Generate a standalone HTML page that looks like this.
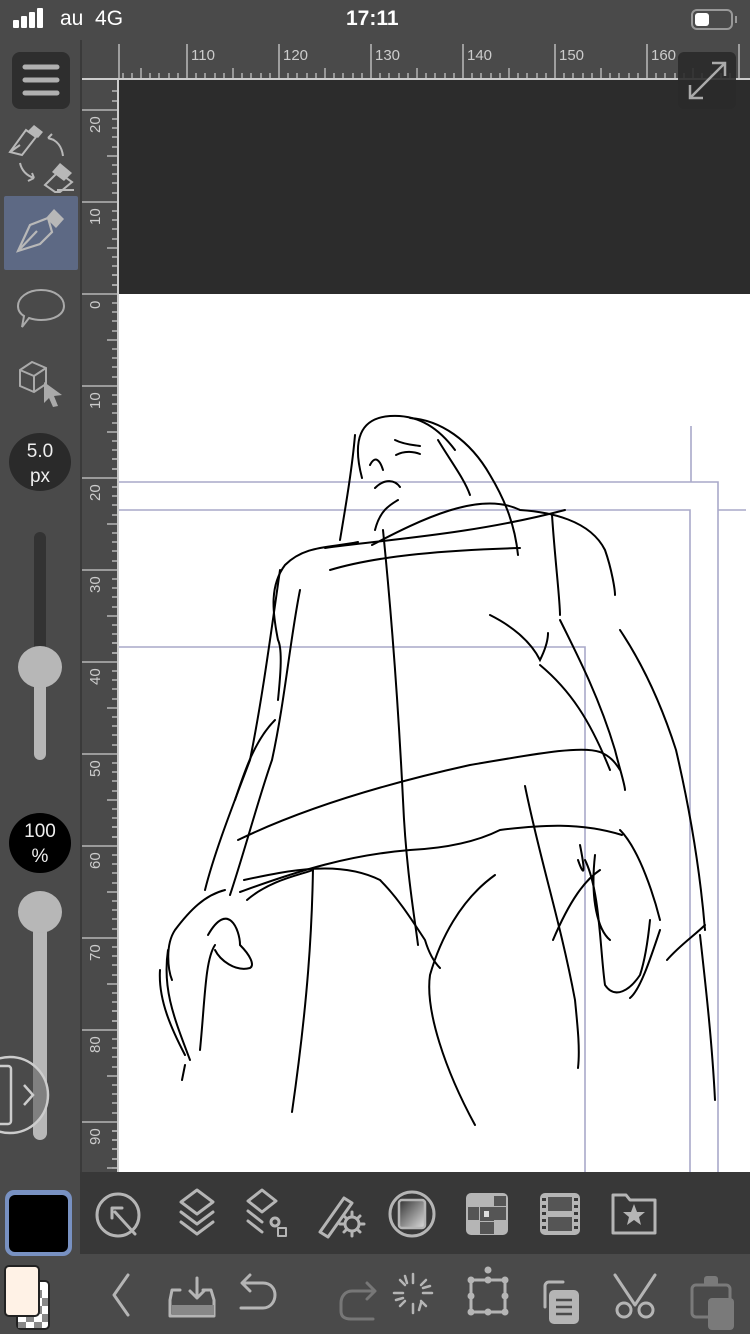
<!DOCTYPE html>
<html><head><meta charset="utf-8"><style>
*{margin:0;padding:0;box-sizing:border-box}
body{width:750px;height:1334px;background:#4a4a4a;position:relative;overflow:hidden;font-family:"Liberation Sans",sans-serif}
.abs{position:absolute}
</style></head><body>
<div class="abs" style="left:0;top:0;width:750px;height:40px;background:#4a4a4a"></div>
<div class="abs" style="left:13px;top:20px;width:6px;height:8px;background:#fff;border-radius:1px"></div>
<div class="abs" style="left:21px;top:16px;width:6px;height:12px;background:#fff;border-radius:1px"></div>
<div class="abs" style="left:29px;top:12px;width:6px;height:16px;background:#fff;border-radius:1px"></div>
<div class="abs" style="left:37px;top:8px;width:6px;height:20px;background:#fff;border-radius:1px"></div>
<div class="abs" style="left:60px;top:7px;color:#fff;font-size:21px">au&nbsp;&nbsp;4G</div>
<div class="abs" style="left:346px;top:7px;color:#fff;font-size:21px;font-weight:bold">17:11</div>
<div class="abs" style="left:691px;top:9px;width:42px;height:21px;border:2px solid #999;border-radius:6px"></div>
<div class="abs" style="left:695px;top:13px;width:14px;height:13px;background:#fff;border-radius:3px"></div>
<div class="abs" style="left:735px;top:16px;width:2px;height:7px;background:#999"></div>

<div class="abs" style="left:80px;top:40px;width:2px;height:1132px;background:#3a3a3a"></div>
<div class="abs" style="left:82px;top:40px;width:668px;height:40px;background:#4a4a4a"></div>
<div class="abs" style="left:82px;top:78px;width:668px;height:2px;background:#ccc"></div>
<div class="abs" style="left:119px;top:80px;width:631px;height:214px;background:#2c2c2c"></div>
<div class="abs" style="left:119px;top:294px;width:631px;height:878px;background:#fff"></div>
<div class="abs" style="left:117px;top:80px;width:2px;height:1092px;background:#ccc"></div>

<svg class="abs" style="left:0;top:0" width="750" height="1334" xmlns="http://www.w3.org/2000/svg">
<g stroke="#ccc" stroke-width="1.3">
<line x1="119" y1="44" x2="119" y2="78"/>
<line x1="187" y1="44" x2="187" y2="78"/><line x1="279" y1="44" x2="279" y2="78"/><line x1="371" y1="44" x2="371" y2="78"/><line x1="463" y1="44" x2="463" y2="78"/><line x1="555" y1="44" x2="555" y2="78"/><line x1="647" y1="44" x2="647" y2="78"/><line x1="739" y1="44" x2="739" y2="78"/>
</g>
<g stroke="#ccc" stroke-width="1.2">
<path d="M123 78v-5M132 78v-5M141 78v-10M150 78v-5M159 78v-5M169 78v-5M178 78v-5
M196 78v-5M205 78v-5M215 78v-5M224 78v-5M233 78v-10M242 78v-5M251 78v-5M261 78v-5M270 78v-5
M288 78v-5M297 78v-5M307 78v-5M316 78v-5M325 78v-10M334 78v-5M343 78v-5M353 78v-5M362 78v-5
M380 78v-5M389 78v-5M399 78v-5M408 78v-5M417 78v-10M426 78v-5M435 78v-5M445 78v-5M454 78v-5
M472 78v-5M481 78v-5M491 78v-5M500 78v-5M509 78v-10M518 78v-5M527 78v-5M537 78v-5M546 78v-5
M564 78v-5M573 78v-5M583 78v-5M592 78v-5M601 78v-10M610 78v-5M619 78v-5M629 78v-5M638 78v-5
M656 78v-5M665 78v-5M675 78v-5M684 78v-5M693 78v-10M702 78v-5M711 78v-5M721 78v-5M730 78v-5"/>
</g>
<g fill="#ccc" font-size="15" font-family="Liberation Sans">
<text x="191" y="60">110</text><text x="283" y="60">120</text><text x="375" y="60">130</text><text x="467" y="60">140</text><text x="559" y="60">150</text><text x="651" y="60">160</text>
</g>
<g stroke="#ccc" stroke-width="1.3">
<path d="M82 110h35M82 202h35M82 294h35M82 386h35M82 478h35M82 570h35M82 662h35M82 754h35M82 846h35M82 938h35M82 1030h35M82 1122h35"/>
</g>
<g stroke="#ccc" stroke-width="1.2">
<path id="lt" d="M112 91h5M112 101h5M112 119h5M112 128h5M112 137h5M112 147h5M107 156h10M112 165h5M112 174h5M112 183h5M112 193h5M112 211h5M112 220h5M112 229h5M112 239h5M107 248h10M112 257h5M112 266h5M112 275h5M112 285h5"/>
<use href="#lt" y="184"/><use href="#lt" y="368"/><use href="#lt" y="552"/><use href="#lt" y="736"/><use href="#lt" y="920"/>
<path d="M112 1131h5M112 1140h5M112 1149h5M112 1159h5M112 1168h5"/>
</g>
<g fill="#ccc" font-size="15" font-family="Liberation Sans">
<text transform="translate(100,133) rotate(-90)">20</text>
<text transform="translate(100,225) rotate(-90)">10</text>
<text transform="translate(100,309) rotate(-90)">0</text>
<text transform="translate(100,409) rotate(-90)">10</text>
<text transform="translate(100,501) rotate(-90)">20</text>
<text transform="translate(100,593) rotate(-90)">30</text>
<text transform="translate(100,685) rotate(-90)">40</text>
<text transform="translate(100,777) rotate(-90)">50</text>
<text transform="translate(100,869) rotate(-90)">60</text>
<text transform="translate(100,961) rotate(-90)">70</text>
<text transform="translate(100,1053) rotate(-90)">80</text>
<text transform="translate(100,1145) rotate(-90)">90</text>
</g>
<rect x="678" y="52" width="58" height="57" rx="6" fill="#2a2a2a" opacity="0.9"/>
<path d="M690 98L725 63M712 63h13v13M690 85v13h13" stroke="#aaa" stroke-width="2.5" fill="none"/>

<g stroke="#a9a9c9" stroke-width="1.6" fill="none">
<path d="M119 482H718V1172"/>
<path d="M119 510H690V1172"/>
<path d="M119 647H585V1172"/>
<path d="M691 426V482"/>
<path d="M718 510H746"/>
</g>
<g stroke="#000" stroke-width="2" fill="none" stroke-linecap="round">
<path d="M362 478C352 440 360 418 390 416C420 414 440 430 455 450"/>
<path d="M355 435C352 470 345 510 340 540"/>
<path d="M410 418C440 420 470 440 490 475C505 500 515 525 518 555"/>
<path d="M438 440C450 460 465 480 470 495"/>
<path d="M395 440C405 445 415 445 420 446M396 455C405 450 415 452 420 454"/>
<path d="M370 465C375 455 380 460 383 470M375 488C385 478 395 480 400 487"/>
<path d="M375 530C380 510 390 505 398 500"/>
<path d="M372 545C420 520 480 490 520 510C550 512 590 520 605 550C612 570 615 590 615 595"/>
<path d="M358 542C330 548 305 545 285 565C270 585 272 610 278 640C283 650 280 680 278 700"/>
<path d="M325 548C380 540 470 535 565 510"/>
<path d="M330 570C380 555 450 550 520 548"/>
<path d="M383 530C390 600 398 700 403 800C406 870 415 920 418 945"/>
<path d="M552 515C555 560 560 600 560 615"/>
<path d="M560 620C580 660 600 700 615 750C620 770 625 785 625 790"/>
<path d="M620 630C640 660 660 700 676 750C690 810 700 870 705 930"/>
<path d="M490 615C510 625 530 640 540 660C545 650 548 640 548 633"/>
<path d="M540 665C570 690 590 720 610 770"/>
<path d="M238 840C300 810 380 785 470 765C530 755 580 745 600 752C610 756 615 762 620 770"/>
<path d="M240 892C300 870 350 855 410 850C450 848 480 840 500 830C540 825 580 822 622 835"/>
<path d="M244 880C290 870 340 860 380 880C400 900 415 925 425 940C428 950 432 960 440 968"/>
<path d="M247 900C270 880 300 875 313 870"/>
<path d="M313 868C312 930 308 1000 292 1112"/>
<path d="M525 786C540 860 560 920 575 1000C578 1030 580 1050 578 1068"/>
<path d="M495 875C460 900 440 940 430 975C425 1010 445 1070 475 1125"/>
<path d="M280 570C270 640 262 700 250 760C235 800 215 850 205 890"/>
<path d="M300 590C290 640 285 700 272 760C258 800 245 850 230 895"/>
<path d="M275 720C255 740 245 770 235 800"/>
<path d="M225 890C205 895 190 910 175 930C165 945 168 970 172 980"/>
<path d="M208 935C228 900 240 930 240 945C250 955 255 965 250 968C235 972 220 960 215 950"/>
<path d="M168 950C162 990 175 1020 190 1060"/>
<path d="M160 970C158 1000 172 1030 185 1055M185 1065L182 1080"/>
<path d="M200 1050C205 1000 205 960 215 945"/>
<path d="M585 860C600 890 600 950 605 985C615 1000 630 990 640 975C645 960 648 940 650 920"/>
<path d="M595 855C590 900 598 930 610 940"/>
<path d="M620 830C640 850 655 900 660 920M660 930C650 960 640 990 630 998M667 960C680 945 695 935 705 925M700 935C705 980 712 1040 715 1100"/>
<path d="M553 940C570 900 585 880 600 870"/>
<path d="M580 845C585 870 585 880 578 860"/>
</g>

<rect x="12" y="52" width="58" height="57" rx="8" fill="#2e2e2e"/>
<g stroke="#b0b0b0" stroke-width="5" stroke-linecap="round"><path d="M25 67h32M25 80h32M25 93h32"/></g>
<g fill="none" stroke="#b8b8b8" stroke-width="2">
<path d="M10 152L26 130L36 137L22 155Z"/><path d="M10 152L20 145"/>
<path d="M48 138C58 140 62 148 63 156M48 138l4 -4M48 138l6 2"/>
<path d="M20 163C22 172 28 176 34 178M34 178l-6 3M34 178l-2 -5"/>
<path d="M45 185L58 172L72 182L60 192H55Z"/><path d="M57 190H74"/>
</g>
<path d="M28 131l6 -6 9 7 -5 6z" fill="#b8b8b8"/>
<path d="M52 172l8 -9 12 10 -8 8z" fill="#b8b8b8"/>
<rect x="4" y="196" width="74" height="74" rx="2" fill="#5d6984"/>
<g fill="none" stroke="#b8b8b8" stroke-width="2.2"><path d="M18 251L30 225L48 218L52 232L40 244Z"/><path d="M18 251L37 231"/></g>
<path d="M46 218l8 -9 10 10 -8 9z" fill="#b8b8b8"/>
<path d="M41 290C56 290 64 298 64 306C64 314 55 320 41 320C36 320 32 319 29 318L22 327L24 316C19 313 18 309 18 306C18 298 27 290 41 290Z" fill="none" stroke="#aaa" stroke-width="2"/>
<g fill="none" stroke="#aaa" stroke-width="2"><path d="M20 370L32 362L46 368V384L34 392L20 386Z"/><path d="M20 370L34 376L46 368M34 376V392"/></g>
<path d="M44 382L62 395L54 396L58 406L53 407L49 398L44 403Z" fill="#aaa"/>
<ellipse cx="40" cy="462" rx="31" ry="29" fill="#2a2a2a"/>
<text x="40" y="457" fill="#eee" font-size="19" text-anchor="middle" font-family="Liberation Sans">5.0</text>
<text x="40" y="482" fill="#eee" font-size="19" text-anchor="middle" font-family="Liberation Sans">px</text>
<rect x="34" y="532" width="12" height="140" rx="6" fill="#333"/>
<rect x="34" y="660" width="12" height="100" rx="6" fill="#b7b7b7"/>
<ellipse cx="40" cy="667" rx="22" ry="21" fill="#b7b7b7"/>
<ellipse cx="40" cy="843" rx="31" ry="30" fill="#000"/>
<text x="40" y="837" fill="#eee" font-size="19" text-anchor="middle" font-family="Liberation Sans">100</text>
<text x="40" y="862" fill="#eee" font-size="19" text-anchor="middle" font-family="Liberation Sans">%</text>
<rect x="33" y="910" width="14" height="230" rx="7" fill="#b7b7b7"/>
<ellipse cx="40" cy="912" rx="22" ry="21" fill="#b7b7b7"/>
<circle cx="10" cy="1095" r="38" fill="#4a4a4a" fill-opacity="0.5" stroke="#ccc" stroke-width="2.5"/>
<rect x="-6" y="1066" width="17" height="58" rx="3" fill="none" stroke="#ccc" stroke-width="2.5"/>
<path d="M24 1085l9 10 -9 10" fill="none" stroke="#ccc" stroke-width="2.5"/>

<rect x="80" y="1172" width="670" height="82" fill="#383838"/>
<rect x="80" y="1254" width="670" height="80" fill="#4a4a4a"/>
<rect x="0" y="1172" width="80" height="162" fill="#4a4a4a"/>
<rect x="5" y="1190" width="67" height="66" rx="9" fill="#7891c2"/>
<rect x="9" y="1195" width="59" height="57" rx="6" fill="#000"/>
<!-- checker swatch -->
<rect x="17" y="1281" width="32" height="48" rx="4" fill="#fff" stroke="#222" stroke-width="2"/>
<g fill="#888"><rect x="18" y="1290" width="8" height="8"/><rect x="34" y="1290" width="8" height="8"/><rect x="26" y="1298" width="8" height="8"/><rect x="42" y="1298" width="6" height="8"/><rect x="18" y="1306" width="8" height="8"/><rect x="34" y="1306" width="8" height="8"/><rect x="26" y="1314" width="8" height="8"/><rect x="42" y="1314" width="6" height="8"/><rect x="18" y="1322" width="8" height="6"/><rect x="34" y="1322" width="8" height="6"/></g>
<rect x="5" y="1266" width="34" height="50" rx="4" fill="#fff2e6" stroke="#222" stroke-width="2"/>

<g fill="none" stroke="#b5b5b5" stroke-width="3" stroke-linecap="round" stroke-linejoin="round">
<circle cx="118" cy="1215" r="21"/><path d="M115 1212L135 1234M112 1208v10M112 1208h10"/>
<path d="M197 1190l16 12 -16 12 -16 -12z"/><path d="M181 1212l16 12 16 -12M181 1222l16 12 16 -12"/>
<path d="M262 1190l14 11 -14 11 -14 -11z"/><path d="M248 1211l14 11M248 1221l14 11"/><circle cx="275" cy="1222" r="4"/><rect x="278" y="1228" width="8" height="8" stroke-width="2"/>
<path d="M320 1232L344 1198l8 5 -24 34z"/><circle cx="352" cy="1224" r="7"/><path d="M352 1212v5M352 1231v5M340 1224h5M359 1224h5M344 1216l3 3M357 1229l3 3M344 1232l3 -3M357 1219l3 -3"/>
<circle cx="412" cy="1214" r="22"/>
</g>
<defs><linearGradient id="g1" x1="0" y1="0" x2="1" y2="1"><stop offset="0" stop-color="#333"/><stop offset="1" stop-color="#ddd"/></linearGradient></defs>
<rect x="399" y="1200" width="26" height="28" rx="3" fill="url(#g1)" stroke="#b5b5b5" stroke-width="2.5"/>
<rect x="466" y="1193" width="42" height="42" rx="5" fill="#b5b5b5"/>
<g fill="#555"><rect x="480" y="1207" width="14" height="14"/><rect x="468" y="1207" width="11" height="13"/><rect x="494" y="1207" width="12" height="13"/><rect x="480" y="1222" width="14" height="12"/><rect x="494" y="1196" width="12" height="10"/></g>
<rect x="484" y="1211" width="5" height="6" fill="#ddd"/>
<rect x="540" y="1193" width="40" height="42" rx="5" fill="#b5b5b5"/>
<g fill="#555"><rect x="548" y="1197" width="24" height="14"/><rect x="548" y="1217" width="24" height="14"/></g>
<g fill="#383838"><rect x="542" y="1198" width="4" height="3"/><rect x="542" y="1205" width="4" height="3"/><rect x="542" y="1212" width="4" height="3"/><rect x="542" y="1219" width="4" height="3"/><rect x="542" y="1226" width="4" height="3"/><rect x="574" y="1198" width="4" height="3"/><rect x="574" y="1205" width="4" height="3"/><rect x="574" y="1212" width="4" height="3"/><rect x="574" y="1219" width="4" height="3"/><rect x="574" y="1226" width="4" height="3"/></g>
<path d="M613 1195h13l4 5h25v33h-42z" fill="none" stroke="#b5b5b5" stroke-width="3" stroke-linejoin="round"/>
<path d="M634 1204l3 8h8l-6 5 2 8 -7 -5 -7 5 2 -8 -6 -5h8z" fill="#b5b5b5"/>

<g fill="none" stroke="#b5b5b5" stroke-width="3" stroke-linecap="round" stroke-linejoin="round">
<path d="M128 1275l-14 20 14 20"/>
<path d="M180 1290h-8l-2 10v16h44v-16l-3 -10h-8"/><path d="M197 1278v20M190 1291l7 7 7 -7"/>
<path d="M250 1275l-8 8 8 8M243 1283h20c8 0 12 6 12 12s-4 13 -12 13h-22"/>
<path d="M367 1299l8 -8 -8 -8" stroke="#777"/><path d="M374 1291h-22c-7 0-11 6 -11 12v8c0 6 4 8 10 8h22" stroke="#777"/>
<path d="M413 1274v9M413 1304v9M394 1293h9M423 1293h9M400 1280l5 5M421 1301l5 5M400 1306l5 -5M421 1285l5 -5M405 1276l2 7M419 1310l2 -7M396 1300l7 -2M430 1286l-7 2" stroke-width="2.5"/>
<rect x="471" y="1280" width="34" height="32"/>
<path d="M545 1307v-21a4 4 0 0 1 4 -4h14"/>
<path d="M615 1275l20 30M655 1275l-20 30"/>
<circle cx="624" cy="1310" r="7"/><circle cx="646" cy="1310" r="7"/>
</g>
<g fill="#b5b5b5"><circle cx="471" cy="1280" r="3.5"/><circle cx="505" cy="1280" r="3.5"/><circle cx="471" cy="1312" r="3.5"/><circle cx="505" cy="1312" r="3.5"/><circle cx="488" cy="1280" r="3.5"/><circle cx="488" cy="1312" r="3.5"/><circle cx="471" cy="1296" r="3.5"/><circle cx="505" cy="1296" r="3.5"/><circle cx="488" cy="1270" r="3.5"/></g>
<rect x="549" y="1290" width="30" height="34" rx="5" fill="#b5b5b5"/>
<g stroke="#4a4a4a" stroke-width="2.5"><path d="M556 1300h16M556 1307h16M556 1314h16"/></g>
<g opacity="0.45"><rect x="692" y="1285" width="38" height="32" rx="4" fill="none" stroke="#b5b5b5" stroke-width="3"/><rect x="704" y="1276" width="14" height="10" rx="3" fill="#b5b5b5"/><rect x="708" y="1298" width="26" height="32" rx="4" fill="#b5b5b5"/></g>
<rect x="172" y="1305" width="42" height="10" fill="#888"/>
</svg>
</body></html>
